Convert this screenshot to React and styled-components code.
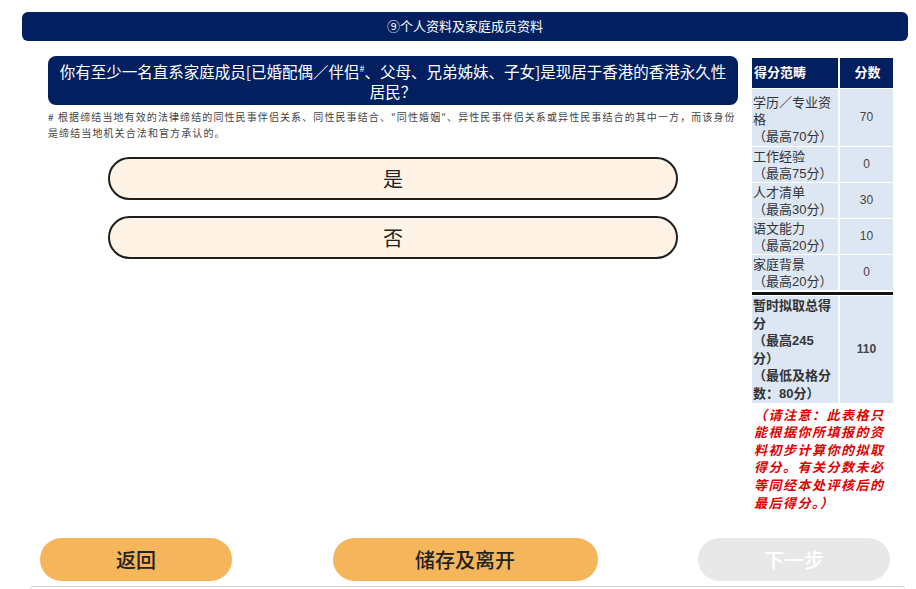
import React from 'react';
import styled, { createGlobalStyle } from 'styled-components';

const GlobalStyle = createGlobalStyle`
  html, body {
    margin: 0;
    padding: 0;
    background: #fff;
  }
  body {
    font-family: "Liberation Sans", "Noto Sans CJK SC", sans-serif;
  }
`;

const scoreRows = [
  { label: '学历／专业资格', max: '（最高70分）', score: 70, tall: true },
  { label: '工作经验', max: '（最高75分）', score: 0 },
  { label: '人才清单', max: '（最高30分）', score: 30 },
  { label: '语文能力', max: '（最高20分）', score: 10 },
  { label: '家庭背景', max: '（最高20分）', score: 0 },
];

const App = () => {
  return (
    <Page>
      <GlobalStyle />
      <Header>⑨个人资料及家庭成员资料</Header>
      <Main>
        <QuestionColumn>
          <QuestionBox>
            <QuestionLine>
              你有至少一名直系家庭成员[已婚配偶／伴侣<sup>#</sup>、父母、兄弟姊妹、子女]是现居于香港的香港永久性
            </QuestionLine>
            <QuestionLine>居民？</QuestionLine>
          </QuestionBox>
          <Footnote>
            # 根据缔结当地有效的法律缔结的同性民事伴侣关系、同性民事结合、"同性婚姻"、异性民事伴侣关系或异性民事结合的其中一方，而该身份
            <br />
            是缔结当地机关合法和官方承认的。
          </Footnote>
          <Choices>
            <ChoiceButton>是</ChoiceButton>
            <ChoiceButton>否</ChoiceButton>
          </Choices>
        </QuestionColumn>

        <Sidebar>
          <ScoreTable>
            <HeadCell>得分范畴</HeadCell>
            <HeadCell $center>分数</HeadCell>
            {scoreRows.map((row) => (
              <React.Fragment key={row.label}>
                <LabelCell $tall={row.tall}>
                  {row.label}
                  <br />
                  {row.max}
                </LabelCell>
                <ValueCell>{row.score}</ValueCell>
              </React.Fragment>
            ))}
            <Divider />
            <LabelCell $bold>
              暂时拟取总得
              <br />分
              <br />（最高245
              <br />分）
              <br />（最低及格分
              <br />数：80分）
            </LabelCell>
            <ValueCell $bold>110</ValueCell>
          </ScoreTable>
          <Notice>
            （请注意：此表格只
            <br />能根据你所填报的资
            <br />料初步计算你的拟取
            <br />得分。有关分数未必
            <br />等同经本处评核后的
            <br />最后得分。）
          </Notice>
        </Sidebar>
      </Main>

      <Footer>
        <NavButton $width={192}>返回</NavButton>
        <NavButton $width={265}>储存及离开</NavButton>
        <NavButton $width={192} $disabled>下一步</NavButton>
      </Footer>
      <BottomEdge />
    </Page>
  );
};

const Page = styled.div`
  width: 916px;
  height: 589px;
  overflow: hidden;
  display: flex;
  flex-direction: column;
  box-sizing: border-box;
  padding-top: 12px;
`;

const Header = styled.div`
  margin: 0 8px 0 22px;
  height: 29px;
  line-height: 29px;
  background: #022060;
  border-radius: 6px;
  color: #fff;
  text-align: center;
  font-size: 13px;
  flex-shrink: 0;
`;

const Main = styled.div`
  flex: 1;
  display: flex;
  align-items: flex-start;
  gap: 14px;
  padding: 15px 0 0 48px;
`;

const QuestionColumn = styled.div`
  width: 690px;
`;

const QuestionBox = styled.div`
  background: #022060;
  color: #fff;
  border-radius: 8px;
  padding: 5px 4px 4px;
  font-family: "Noto Sans CJK SC", sans-serif;
  font-size: 15.5px;
  text-align: center;
  white-space: nowrap;

  sup {
    font-size: 9px;
    line-height: 0;
    vertical-align: 6px;
  }
`;

const QuestionLine = styled.div`
  height: 20px;
  line-height: 20px;
`;

const Footnote = styled.p`
  margin: 4px 0 0;
  font-family: "Noto Sans CJK SC", sans-serif;
  font-size: 10px;
  letter-spacing: 1.1px;
  line-height: 16px;
  color: #444;
  white-space: nowrap;
`;

const Choices = styled.div`
  display: flex;
  flex-direction: column;
  gap: 16px;
  margin: 16px 0 0 60px;
  width: 570px;
`;

const ChoiceButton = styled.button`
  height: 43px;
  border: 2px solid #1e1e1e;
  border-radius: 22px;
  background: #fff3e6;
  color: #222;
  font-family: "Liberation Serif", "Noto Sans CJK SC", serif;
  font-size: 20px;
  cursor: pointer;
`;

const Sidebar = styled.div`
  width: 141px;
  padding-top: 2px;
`;

const ScoreTable = styled.div`
  display: grid;
  grid-template-columns: 86px 53px;
  column-gap: 2px;
  row-gap: 1px;
  font-size: 13px;
  line-height: 17px;
`;

const HeadCell = styled.div`
  background: #022060;
  color: #fff;
  font-weight: bold;
  height: 30px;
  line-height: 30px;
  padding-left: 2px;
  text-align: ${(p) => (p.$center ? 'center' : 'left')};
`;

const LabelCell = styled.div`
  background: #dde7f3;
  color: #333;
  padding: ${(p) => (p.$tall ? '5px 0 1px 1px' : '1px 0 0 1px')};
  height: ${(p) => (p.$tall || p.$bold ? 'auto' : '34px')};
  line-height: ${(p) => (p.$bold ? '17.6px' : '17px')};
  font-weight: ${(p) => (p.$bold ? 'bold' : 'normal')};
  overflow: hidden;
`;

const ValueCell = styled.div`
  background: #dde7f3;
  color: #444;
  font-size: 12px;
  display: flex;
  align-items: center;
  justify-content: center;
  font-weight: ${(p) => (p.$bold ? 'bold' : 'normal')};
`;

const Divider = styled.div`
  grid-column: 1 / -1;
  height: 3px;
  margin-top: 1px;
  background: #111;
`;

const Notice = styled.p`
  margin: 4px 0 0 2px;
  color: #e00000;
  font-weight: bold;
  font-style: italic;
  font-size: 13px;
  line-height: 17.6px;
  letter-spacing: 1.5px;
  white-space: nowrap;
`;

const Footer = styled.div`
  display: flex;
  justify-content: space-between;
  padding: 0 26px 0 40px;
  flex-shrink: 0;
`;

const NavButton = styled.button`
  width: ${(p) => p.$width}px;
  height: 43px;
  border: none;
  border-radius: 22px;
  background: ${(p) => (p.$disabled ? '#e8e8e8' : '#f5b55a')};
  color: ${(p) => (p.$disabled ? '#fff' : '#222')};
  font-family: "Noto Sans CJK SC", sans-serif;
  font-size: 20px;
  font-weight: 500;
  cursor: ${(p) => (p.$disabled ? 'default' : 'pointer')};
`;

const BottomEdge = styled.div`
  margin: 5px 11px 0 30px;
  height: 2px;
  border-top: 1px solid #cfcfcf;
  border-left: 1px solid #e4e4e4;
  border-right: 1px solid #e4e4e4;
  border-radius: 3px 3px 0 0;
  flex-shrink: 0;
`;

export default App;
